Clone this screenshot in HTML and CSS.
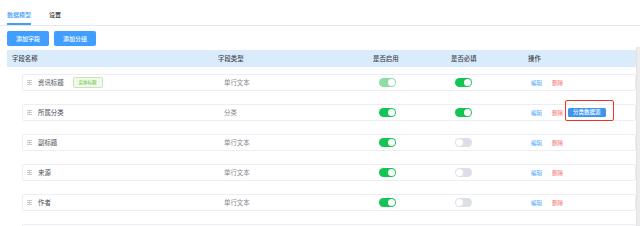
FILE: index.html
```html
<!DOCTYPE html>
<html lang="zh">
<head>
<meta charset="utf-8">
<link rel="stylesheet" href="styles.css">
</head>
<body>
<div class="tabs">
  <div class="tab active">数据模型</div>
  <div class="tab">设置</div>
</div>
<div class="toolbar">
  <button class="btn">添加字段</button>
  <button class="btn">添加分组</button>
</div>
<div class="main">
  <div class="table">
    <div class="thead">
      <div>字段名称</div>
      <div>字段类型</div>
      <div>是否启用</div>
      <div>是否必填</div>
      <div>操作</div>
    </div>
    <div class="rows">
      <div class="row">
        <div class="name"><svg class="drag" viewBox="0 0 5 5"><rect x="0" y="0" width="5" height="1"/><rect x="0" y="2" width="5" height="1"/><rect x="0" y="4" width="5" height="1"/><rect x="2" y="0" width="1" height="5"/></svg><span>资讯标题</span><span class="tag">实体标题</span></div>
        <div class="type">单行文本</div>
        <div><span class="switch on disabled"></span></div>
        <div><span class="switch on"></span></div>
        <div class="ops"><span class="edit">编辑</span><span class="del">删除</span></div>
      </div>
      <div class="row">
        <div class="name"><svg class="drag" viewBox="0 0 5 5"><rect x="0" y="0" width="5" height="1"/><rect x="0" y="2" width="5" height="1"/><rect x="0" y="4" width="5" height="1"/><rect x="2" y="0" width="1" height="5"/></svg><span>所属分类</span></div>
        <div class="type">分类</div>
        <div><span class="switch on"></span></div>
        <div><span class="switch on"></span></div>
        <div class="ops"><span class="edit">编辑</span><span class="del">删除</span><span class="src-wrap"><span class="src">分类数据源</span><span class="mark"></span></span></div>
      </div>
      <div class="row">
        <div class="name"><svg class="drag" viewBox="0 0 5 5"><rect x="0" y="0" width="5" height="1"/><rect x="0" y="2" width="5" height="1"/><rect x="0" y="4" width="5" height="1"/><rect x="2" y="0" width="1" height="5"/></svg><span>副标题</span></div>
        <div class="type">单行文本</div>
        <div><span class="switch on"></span></div>
        <div><span class="switch"></span></div>
        <div class="ops"><span class="edit">编辑</span><span class="del">删除</span></div>
      </div>
      <div class="row">
        <div class="name"><svg class="drag" viewBox="0 0 5 5"><rect x="0" y="0" width="5" height="1"/><rect x="0" y="2" width="5" height="1"/><rect x="0" y="4" width="5" height="1"/><rect x="2" y="0" width="1" height="5"/></svg><span>来源</span></div>
        <div class="type">单行文本</div>
        <div><span class="switch on"></span></div>
        <div><span class="switch"></span></div>
        <div class="ops"><span class="edit">编辑</span><span class="del">删除</span></div>
      </div>
      <div class="row">
        <div class="name"><svg class="drag" viewBox="0 0 5 5"><rect x="0" y="0" width="5" height="1"/><rect x="0" y="2" width="5" height="1"/><rect x="0" y="4" width="5" height="1"/><rect x="2" y="0" width="1" height="5"/></svg><span>作者</span></div>
        <div class="type">单行文本</div>
        <div><span class="switch on"></span></div>
        <div><span class="switch"></span></div>
        <div class="ops"><span class="edit">编辑</span><span class="del">删除</span></div>
      </div>
      <div class="row"></div>
    </div>
  </div>
  <div class="scrollbar"></div>
</div>
</body>
</html>
```
FILE: styles.css
```css
* { box-sizing: border-box; }
html, body { margin: 0; padding: 0; }
body {
  width: 640px;
  height: 226px;
  overflow: hidden;
  background: #fff;
  font-family: "Noto Sans CJK SC", "Noto Sans", sans-serif;
  color: #606266;
}
.tabs {
  display: flex;
  gap: 18px;
  padding-left: 7px;
  height: 26px;
  border-bottom: 1px solid #e6e8ee;
}
.tab {
  height: 25px;
  padding-top: 10px;
  font-size: 6px;
  line-height: 10px;
  color: #303133;
  font-weight: 500;
}
.tab.active {
  color: #409eff;
  border-bottom: 2px solid #409eff;
}
.toolbar {
  display: flex;
  gap: 5px;
  padding-left: 7px;
  margin-top: 5px;
}
.btn {
  width: 42px;
  height: 15px;
  padding: 0;
  border: none;
  border-radius: 2px;
  background: #409eff;
  color: #fff;
  font-family: inherit;
  font-size: 6px;
  font-weight: 500;
  line-height: 15px;
}
.main {
  display: flex;
  margin-top: 1px;
  height: 179px;
  overflow: hidden;
}
.table {
  flex: 1;
  margin-left: 7px;
  padding-top: 3px;
  overflow: hidden;
}
.scrollbar {
  width: 4px;
  background: #ececec;
  border-left: 1px solid #e2e2e2;
}
.thead {
  display: grid;
  grid-template-columns: 206px 155px 78px 77px 1fr;
  padding-left: 5px;
  height: 17px;
  line-height: 17px;
  background: #daebfc;
  color: #41464f;
  font-size: 6.4px;
  font-weight: 500;
}
.rows {
  margin-top: 7px;
  padding-left: 15px;
}
.row {
  display: grid;
  grid-template-columns: 197px 155px 76px 76px 1fr;
  align-items: center;
  height: 17px;
  margin-bottom: 13px;
  padding-left: 4px;
  border: 1px solid #eceef3;
  border-radius: 2px;
  font-size: 6.4px;
}
.name {
  display: flex;
  align-items: center;
  color: #4a4d53;
}
.drag {
  width: 5px;
  height: 5px;
  margin-right: 6px;
  fill: #c8cacf;
}
.tag {
  margin-left: 9px;
  height: 11px;
  padding: 0 5px;
  border: 1px solid #c2e7b0;
  border-radius: 1.5px;
  background: #f0f9eb;
  color: #67c23a;
  font-size: 4.5px;
  line-height: 9px;
}
.type { color: #85888e; }
.switch {
  display: block;
  position: relative;
  width: 17px;
  height: 9px;
  border-radius: 4.5px;
  background: #dcdfe6;
}
.switch::after {
  content: "";
  position: absolute;
  top: 1px;
  left: 1px;
  width: 7px;
  height: 7px;
  border-radius: 50%;
  background: #fff;
}
.switch.on { background: #13c552; }
.switch.on::after { left: 9px; }
.switch.disabled { background: #8edca6; }
.ops {
  display: flex;
  align-items: center;
  font-size: 5.5px;
}
.edit { color: #409eff; }
.del { color: #f56c6c; margin-left: 10px; }
.src-wrap {
  position: relative;
  margin-left: 5px;
  display: flex;
}
.src {
  height: 9px;
  padding: 0 5px;
  border-radius: 1.5px;
  background: #3d95f0;
  color: #fff;
  font-size: 5.5px;
  font-weight: 500;
  line-height: 9px;
}
.mark {
  position: absolute;
  left: -3px;
  top: -8px;
  right: -8px;
  bottom: -4px;
  border: 1px solid #f0312b;
  border-radius: 2px;
}
```
